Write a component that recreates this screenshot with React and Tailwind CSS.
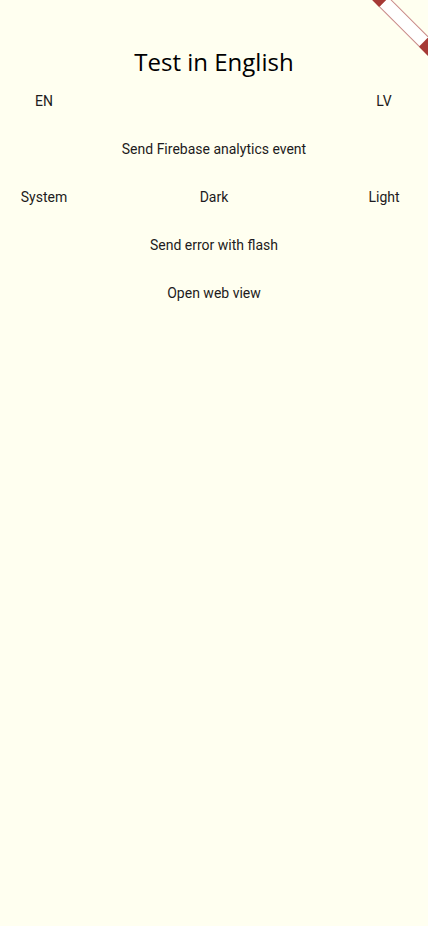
import React from "react";

// simple text button, Material-like 88px min width
function TextBtn({ children, className = "" }) {
  return (
    <button
      type="button"
      className={`h-12 min-w-[88px] px-3 flex items-center justify-center text-[14px] text-[#1d1b20] ${className}`}
    >
      {children}
    </button>
  );
}

export default function App() {
  return (
    <div
      className="relative w-full min-h-[926px] overflow-hidden bg-[#fffff0]"
      style={{ fontFamily: "Roboto, 'Liberation Sans', sans-serif" }}
    >
      {/* debug-style ribbon in corner */}
      <div className="absolute left-[344px] top-[15px] w-[120px] h-[14px] rotate-45 flex pointer-events-none">
        <div className="w-[32px] bg-[#a63a36]" />
        <div className="flex-1 bg-white border-y border-[#c98a86]" />
        <div className="w-[32px] bg-[#a63a36]" />
      </div>

      <div className="flex flex-col pt-[46px]">
        <h1
          className="h-[31px] text-center text-[24px] leading-[32px] text-black"
          style={{ fontFamily: "'Open Sans', sans-serif" }}
        >
          Test in English
        </h1>

        <div className="flex justify-between">
          <TextBtn>EN</TextBtn>
          <TextBtn>LV</TextBtn>
        </div>

        <div className="flex justify-center">
          <TextBtn>Send Firebase analytics event</TextBtn>
        </div>

        <div className="flex justify-between">
          <TextBtn>System</TextBtn>
          <TextBtn>Dark</TextBtn>
          <TextBtn>Light</TextBtn>
        </div>

        <div className="flex justify-center">
          <TextBtn>Send error with flash</TextBtn>
        </div>

        <div className="flex justify-center">
          <TextBtn>Open web view</TextBtn>
        </div>
      </div>
    </div>
  );
}
